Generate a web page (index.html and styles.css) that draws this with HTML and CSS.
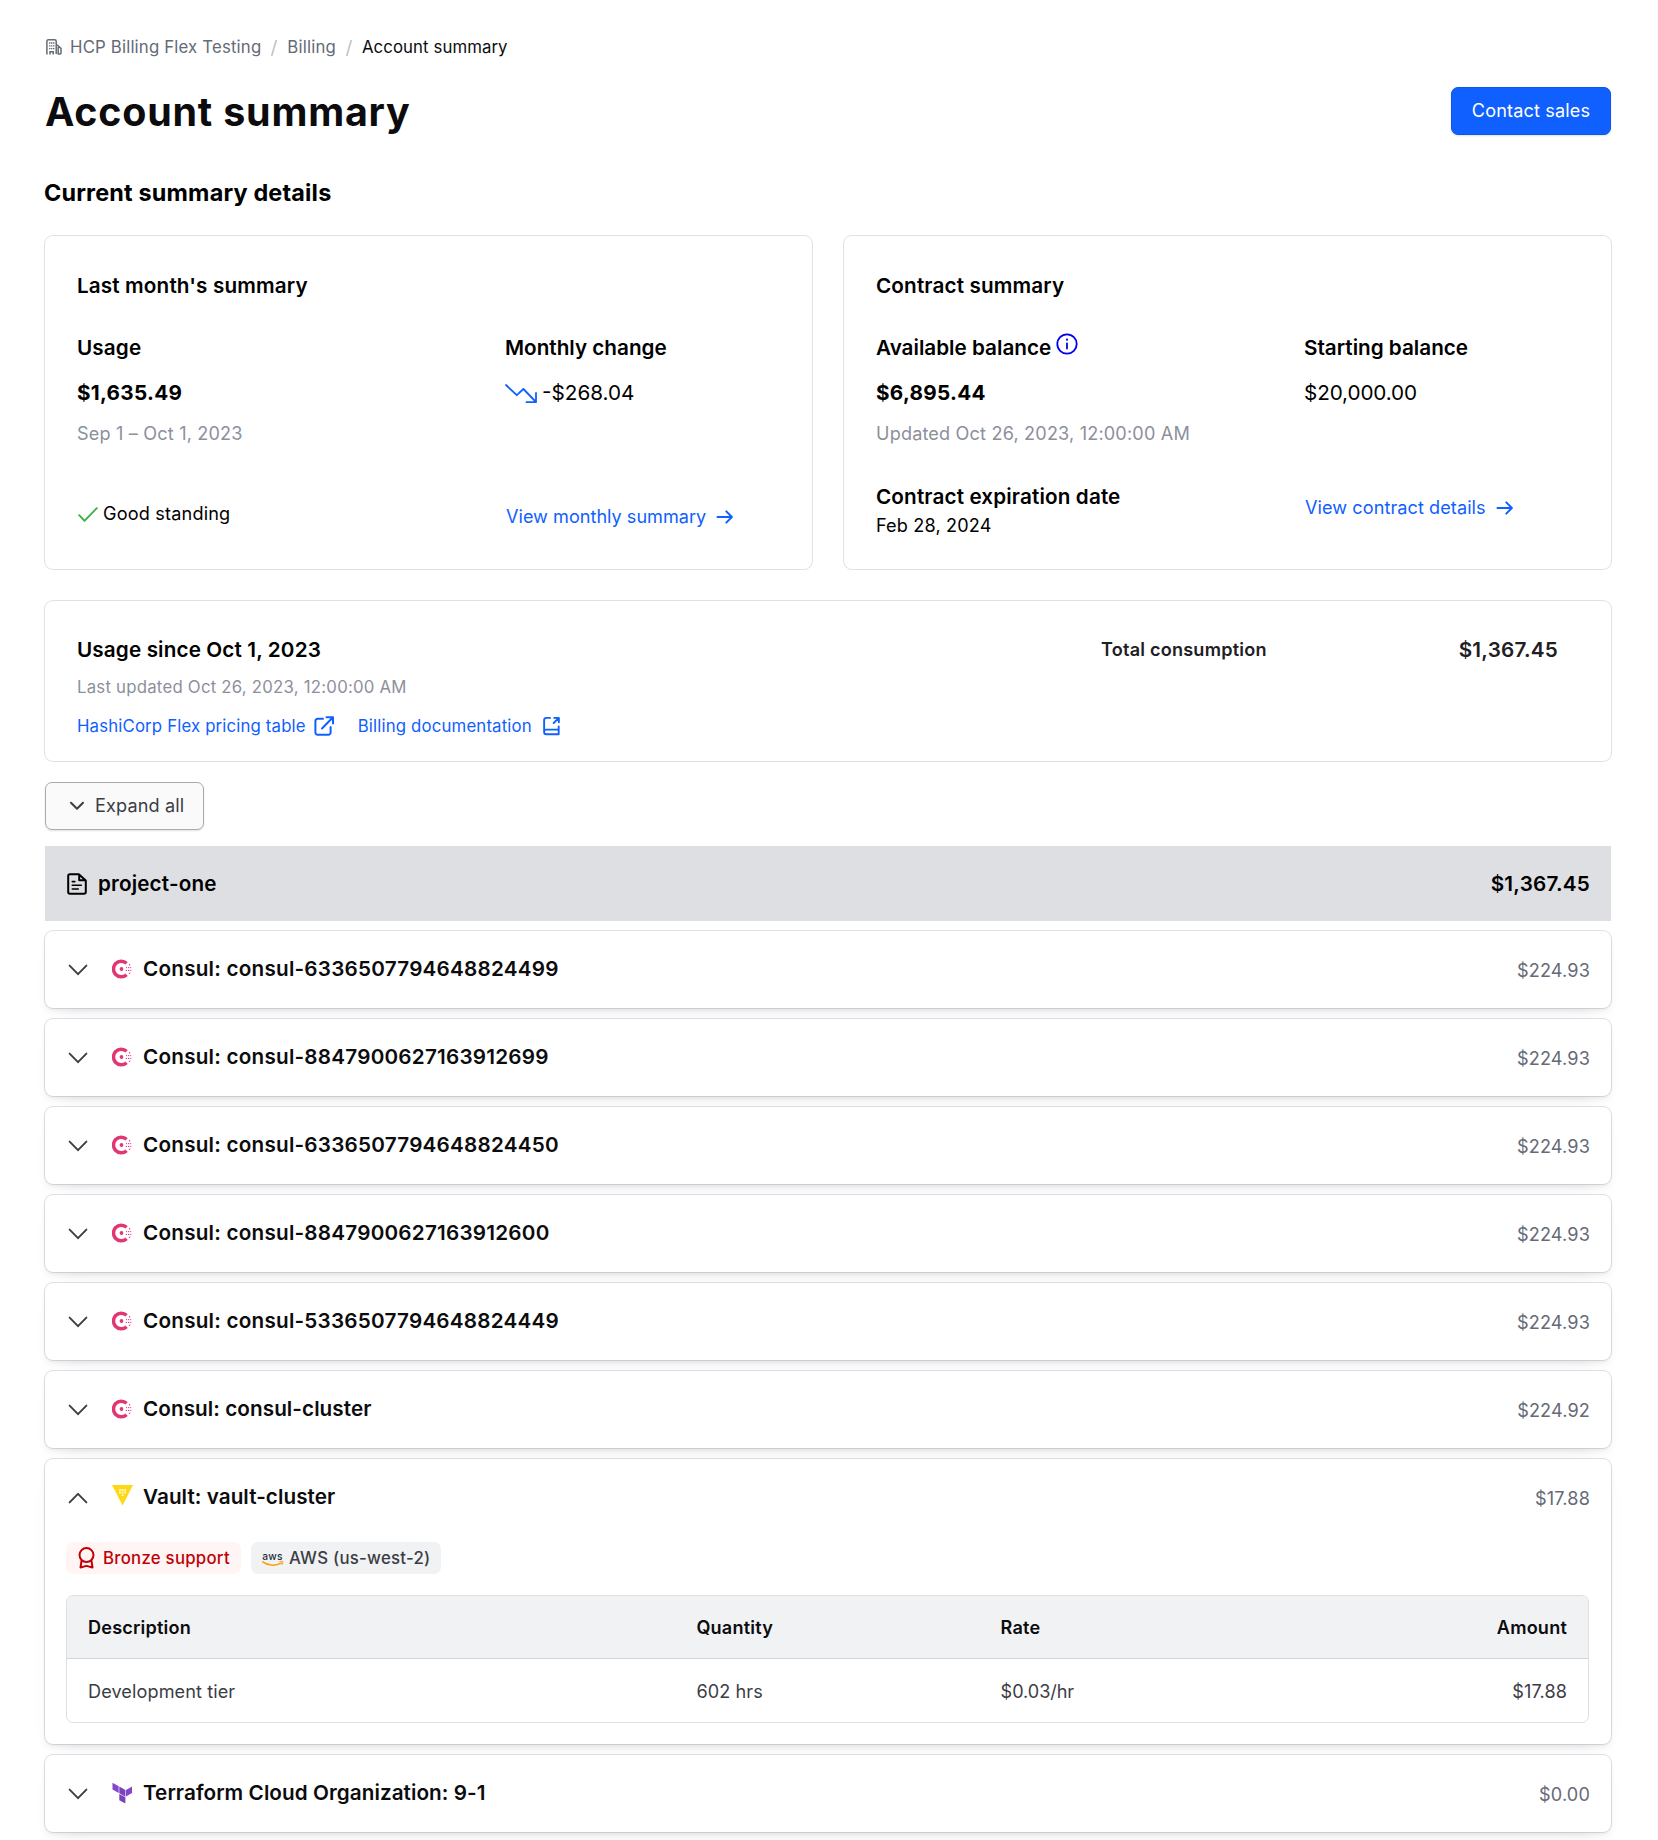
FILE: index.html
```html
<!DOCTYPE html>
<html lang="en">
<head>
<meta charset="utf-8">
<title>Account summary</title>
<link rel="stylesheet" href="styles.css">
</head>
<body>
<svg class="sprite" aria-hidden="true">
  <symbol id="chevron-down" viewBox="0 0 20 12"><path d="M1.6 1.6 10 10.2l8.4-8.6" fill="none" stroke="currentColor" stroke-width="1.9" stroke-linecap="round" stroke-linejoin="round"/></symbol>
  <symbol id="chevron-up" viewBox="0 0 20 12"><path d="M1.6 10.4 10 1.8l8.4 8.6" fill="none" stroke="currentColor" stroke-width="1.9" stroke-linecap="round" stroke-linejoin="round"/></symbol>
  <symbol id="arrow-right" viewBox="0 0 18 16"><path d="M1.5 8h14.4M10.3 2.4l5.6 5.600-5.600 5.600" fill="none" stroke="currentColor" stroke-width="2" stroke-linecap="round" stroke-linejoin="round"/></symbol>
  <symbol id="consul" viewBox="0 0 20 20">
    <path d="M14.600 4.300A7.800 7.800 0 1 0 14.600 15.700" fill="none" stroke="#e03875" stroke-width="3.500"/>
    <circle cx="9.5" cy="10" r="1.900" fill="#e03875"/>
    <g fill="#e03875"><circle cx="14.4" cy="8.600" r=".6"/><circle cx="14.4" cy="11.400" r=".6"/><circle cx="17.600" cy="5.700" r=".7"/><circle cx="16.600" cy="8.600" r=".7"/><circle cx="16.600" cy="11.400" r=".7"/><circle cx="17.600" cy="14.300" r=".7"/><circle cx="18.700" cy="8.600" r=".6"/><circle cx="18.700" cy="11.400" r=".6"/></g>
  </symbol>
</svg>
<main class="page">
  <nav class="crumbs">
    <svg class="crumb-icon" viewBox="0 0 16 16" fill="none" stroke="currentColor" stroke-width="1.5"><path d="M.9 15.6V2.3C.9 1.3 1.5.8 2.4.8h6.300c.9 0 1.500.5 1.500 1.500V15M4 15.600v-2.800h3.200v2.800M10.200 6.300h1.300l3.500 3.100v4.700c0 .5-.300.9-.9.9h-1.900V6.500" /><path d="M3 4h1.400M5 4h1.400M7 4h1.400M3 6.800h1.400M5 6.800h1.400M7 6.800h1.400M3 9.600h1.400M5 9.600h1.400M7 9.600h1.400" stroke-width="1.300"/></svg>
    <a class="crumb">HCP Billing Flex Testing</a>
    <svg class="slash" viewBox="0 0 8 18"><path d="M6.300 1 1.700 17" stroke="#c2c5cb" stroke-width="1.700" fill="none"/></svg>
    <a class="crumb">Billing</a>
    <svg class="slash" viewBox="0 0 8 18"><path d="M6.300 1 1.700 17" stroke="#c2c5cb" stroke-width="1.700" fill="none"/></svg>
    <span class="crumb current">Account summary</span>
  </nav>
  <header class="page-header">
    <h1>Account summary</h1>
    <button class="btn primary">Contact sales</button>
  </header>
  <h2>Current summary details</h2>

  <section class="cards">
    <article class="card">
      <h3>Last month's summary</h3>
      <div class="facts">
        <div>
          <h4>Usage</h4>
          <p class="value strong">$1,635.49</p>
          <p class="note">Sep 1 – Oct 1, 2023</p>
        </div>
        <div>
          <h4 class="snug">Monthly change</h4>
          <p class="value trend"><svg class="trend-icon" viewBox="0 0 32 20"><path d="M1 1l10.800 10.200 6.600-6.200L31 18M21.500 18.200H31V9" fill="none" stroke="#1060ff" stroke-width="1.800" stroke-linecap="round" stroke-linejoin="round"/></svg>-$268.04</p>
        </div>
      </div>
      <div class="card-foot">
        <p class="standing"><svg class="check" viewBox="0 0 20 15"><path d="M1.200 8.200l5.300 5.600L18.800 1.200" fill="none" stroke="#3cb043" stroke-width="1.900" stroke-linecap="round" stroke-linejoin="round"/></svg>Good standing</p>
        <a class="link view monthly">View monthly summary<svg class="arrow"><use href="#arrow-right"/></svg></a>
      </div>
    </article>
    <article class="card">
      <h3>Contract summary</h3>
      <div class="facts">
        <div>
          <h4 class="snug with-info">Available balance<svg class="info" viewBox="0 0 22 22"><circle cx="11" cy="11" r="9.700" fill="none" stroke="#0000ee" stroke-width="1.800"/><path d="M11 10.300v5.200" stroke="#0000ee" stroke-width="1.800" stroke-linecap="round"/><circle cx="11" cy="6.700" r="1.100" fill="#0000ee"/></svg></h4>
          <p class="value strong">$6,895.44</p>
          <p class="note">Updated Oct 26, 2023, 12:00:00 AM</p>
        </div>
        <div>
          <h4 class="snug">Starting balance</h4>
          <p class="value start">$20,000.00</p>
        </div>
      </div>
      <div class="card-foot">
        <div>
          <h4>Contract expiration date</h4>
          <p class="expiry">Feb 28, 2024</p>
        </div>
        <a class="link view contract">View contract details<svg class="arrow"><use href="#arrow-right"/></svg></a>
      </div>
    </article>
  </section>

  <section class="card usage">
    <div class="usage-info">
      <h3>Usage since Oct 1, 2023</h3>
      <p class="updated">Last updated Oct 26, 2023, 12:00:00 AM</p>
      <div class="doc-links">
        <a class="link small">HashiCorp Flex pricing table<svg class="ext" viewBox="0 0 20 20" fill="none" stroke="currentColor" stroke-width="2" stroke-linecap="round" stroke-linejoin="round"><path d="M9 2.800H3.600A2.200 2.200 0 0 0 1.400 5v11.600a2.200 2.200 0 0 0 2.200 2.200h10.800a2.200 2.200 0 0 0 2.200-2.200V11M12.500 1.200h6.500v6.300M19 1.200 8 12.500"/></svg></a>
        <a class="link small">Billing documentation<svg class="book" viewBox="0 0 18 20" fill="none" stroke="currentColor" stroke-width="2" stroke-linecap="round" stroke-linejoin="round"><path d="M7.500 1.400H3.400a2.200 2.200 0 0 0-2.200 2.200v13c0 1.300.9 2.200 2.200 2.200h13.200v-8.300M16.600 13.800H3.400c-1.300 0-2.200.9-2.200 2.200M11.900 1.400h4.900v4.700M16.600 1.600l-5.300 5.200"/></svg></a>
      </div>
    </div>
    <div class="total">
      <span class="total-label">Total consumption</span>
      <span class="total-value">$1,367.45</span>
    </div>
  </section>

  <button class="btn secondary"><svg class="btn-chevron" viewBox="0 0 16 10"><path d="M2 1.800l6 6 6-6" fill="none" stroke="currentColor" stroke-width="2" stroke-linecap="round" stroke-linejoin="round"/></svg>Expand all</button>

  <div class="project">
    <svg class="doc" viewBox="0 0 20 22" fill="none" stroke="#000" stroke-width="2" stroke-linejoin="round"><path d="M11.800 1.200H3A1.800 1.800 0 0 0 1.200 3v16A1.800 1.800 0 0 0 3 20.800h14a1.800 1.800 0 0 0 1.800-1.800V7.500zM12.200 1.200v6h6.200"/><path d="M5.300 8.600h2.600M5.300 12.200h9M5.300 16h6" stroke-width="1.600" stroke-linecap="round"/></svg>
    <span class="project-name">project-one</span>
    <span class="project-total">$1,367.45</span>
  </div>

  <section class="resources">
    <article class="row"><div class="row-head"><svg class="chev"><use href="#chevron-down"/></svg><svg class="logo"><use href="#consul"/></svg><span class="name">Consul: consul-6336507794648824499</span><span class="amount">$224.93</span></div></article>
    <article class="row"><div class="row-head"><svg class="chev"><use href="#chevron-down"/></svg><svg class="logo"><use href="#consul"/></svg><span class="name">Consul: consul-8847900627163912699</span><span class="amount">$224.93</span></div></article>
    <article class="row"><div class="row-head"><svg class="chev"><use href="#chevron-down"/></svg><svg class="logo"><use href="#consul"/></svg><span class="name">Consul: consul-6336507794648824450</span><span class="amount">$224.93</span></div></article>
    <article class="row"><div class="row-head"><svg class="chev"><use href="#chevron-down"/></svg><svg class="logo"><use href="#consul"/></svg><span class="name">Consul: consul-8847900627163912600</span><span class="amount">$224.93</span></div></article>
    <article class="row"><div class="row-head"><svg class="chev"><use href="#chevron-down"/></svg><svg class="logo"><use href="#consul"/></svg><span class="name">Consul: consul-5336507794648824449</span><span class="amount">$224.93</span></div></article>
    <article class="row"><div class="row-head"><svg class="chev"><use href="#chevron-down"/></svg><svg class="logo"><use href="#consul"/></svg><span class="name plain">Consul: consul-cluster</span><span class="amount">$224.92</span></div></article>
    <article class="row open">
      <div class="row-head"><svg class="chev"><use href="#chevron-up"/></svg><svg class="logo tall" viewBox="0 0 21 21"><path d="M0 0h21L10.600 20.500z" fill="#ffd814"/><path d="M7 4h1.900v1.900H7zM9.600 4h1.900v1.900H9.600zM12.200 4h1.900v1.900h-1.900zM7 6.600h1.900v1.900H7zM9.600 6.600h1.900v1.900H9.600zM12.200 6.600h1.900v1.900h-1.900zM9.600 9.200h1.900v1.900H9.600z" fill="#fff6c4"/></svg><span class="name plain">Vault: vault-cluster</span><span class="amount">$17.88</span></div>
      <div class="badges">
        <span class="badge critical"><svg class="award" viewBox="0 0 17 22" fill="none" stroke="currentColor" stroke-width="2" stroke-linejoin="round"><circle cx="8.500" cy="8.100" r="7"/><path d="M3.600 13.500 2.500 20.500l6-1.600 6 1.600-1.100-7"/></svg>Bronze support</span>
        <span class="badge neutral"><svg class="aws" viewBox="0 0 22 16"><text x="0.300" y="8.600" font-size="10.500" font-weight="500" textLength="20.500" lengthAdjust="spacingAndGlyphs" fill="#252f3e">aws</text><path d="M.8 10.900c5.200 4 13 4.200 18.300 1.200" fill="none" stroke="#f90" stroke-width="1.500" stroke-linecap="round"/><path d="M17.300 10.800c1.300-.6 2.800-.7 3.500-.3.200 1-.3 2.400-1.200 3.400" fill="none" stroke="#f90" stroke-width="1"/></svg>AWS (us-west-2)</span>
      </div>
      <table class="lines">
        <thead><tr><th class="c-desc">Description</th><th class="c-qty">Quantity</th><th class="c-rate">Rate</th><th class="c-amt">Amount</th></tr></thead>
        <tbody><tr><td>Development tier</td><td>602 hrs</td><td class="rate">$0.03/hr</td><td class="c-amt">$17.88</td></tr></tbody>
      </table>
    </article>
    <article class="row"><div class="row-head"><svg class="chev"><use href="#chevron-down"/></svg><svg class="logo" viewBox="0 0 20 20"><path d="M.5-.2l6.200 3.500v6.600L.5 6.500zM14 6.900l6-3.400v6.600l-6 3.500z" fill="#8447cb"/><path d="M7.300 3.600l6.100 3.400v6.700l-6.100-3.500z" fill="#7b42bc"/><path d="M7.300 10.900l6.100 3.400v6.300l-6.100-3.300z" fill="#7b42bc"/></svg><span class="name plain">Terraform Cloud Organization: 9-1</span><span class="amount">$0.00</span></div></article>
  </section>
</main>
</body>
</html>
```
FILE: styles.css
```css
* { box-sizing: border-box; }
body { margin: 0; background: #fff; color: #000; font-family: Inter, "Liberation Sans", sans-serif; font-size: 18.1px; }
h1, h2, h3, h4, p { margin: 0; }
svg { display: block; flex: none; overflow: visible; }
.sprite { position: absolute; width: 0; height: 0; overflow: hidden; }
.page { height: 1840px; padding: 35px 47px 0 45px; overflow: hidden; }

.crumbs { display: flex; align-items: center; height: 24px; font-size: 16.8px; letter-spacing: .16px; color: #656a76; }
.crumb-icon { width: 16px; height: 16px; margin: 0 8px 0 1px; }
.slash { width: 8px; height: 18px; margin: 2px 9px 0 9px; }
.crumb.current { color: #0c0c0e; letter-spacing: .08px; }

.page-header { display: flex; justify-content: space-between; align-items: flex-start; height: 48px; margin-top: 28px; }
h1 { font-size: 39.4px; line-height: 50px; font-weight: 700; letter-spacing: .8px; color: #0c0c0e; }
h2 { margin-top: 44px; font-size: 23.4px; line-height: 28px; font-weight: 700; letter-spacing: .18px; margin-left: -1px; }

.btn { display: flex; align-items: center; height: 48px; border-radius: 7px; font: inherit; letter-spacing: .14px; line-height: 24px; }
.primary { width: 160px; justify-content: center; padding: 0 0 2px; border: 1px solid #0c56e9; background: #1060ff; color: #fff; box-shadow: 0 1px 2px rgba(101, 106, 118, .2); }
.secondary { width: 159px; margin-top: 21px; padding: 0 0 2px 23px; border: 1px solid #a9abb1; background: #fafafa; color: #3b3d45; box-shadow: 0 1px 2px rgba(101, 106, 118, .2); }
.btn-chevron { width: 16px; height: 10px; margin: 1px 10px 0 0; }

.cards { display: grid; grid-template-columns: 1fr 1fr; gap: 32px; margin-top: 29px; }
.card { border-radius: 8px; box-shadow: 0 0 0 1px #e0e1e4; background: #fff; }
.cards .card { height: 333px; padding: 36px 32px 0; }
h3, h4 { font-size: 20.7px; line-height: 28px; font-weight: 600; letter-spacing: .13px; }
.snug { letter-spacing: 0; }
.facts { display: grid; grid-template-columns: 428px 1fr; height: 116px; margin-top: 34px; }
.with-info { display: flex; }
.info { width: 22px; height: 22px; margin: -1px 0 0 5px; }
.value { margin-top: 17px; font-size: 20.7px; line-height: 28px; }
.value.strong { font-weight: 700; letter-spacing: .28px; }
.value.start { letter-spacing: -.1px; }
.trend { display: flex; }
.trend-icon { width: 32px; height: 20px; margin: 5px 5px 0 0; }
.note { margin-top: 14px; line-height: 25px; letter-spacing: .17px; color: #8c909c; }
.card-foot { display: grid; grid-template-columns: 428px 1fr; align-items: start; margin-top: 33px; }
.standing { display: flex; align-items: center; margin-top: 18px; line-height: 25px; letter-spacing: .18px; }
.check { width: 20px; height: 15px; margin: 2px 5px 0 1px; }
.expiry { margin-top: 2px; line-height: 25px; letter-spacing: .15px; }
.link { display: flex; align-items: center; color: #1060ff; text-decoration: none; }
.view { line-height: 25px; padding-left: 1px; }
.monthly { margin-top: 21px; letter-spacing: .01px; }
.contract { margin-top: 12px; letter-spacing: .07px; }
.arrow { width: 18px; height: 16px; margin-left: 10px; }

.usage { display: flex; justify-content: space-between; height: 160px; margin-top: 32px; padding: 35px 53px 0 32px; }
.updated { margin-top: 11px; font-size: 16.8px; line-height: 24px; letter-spacing: .22px; color: #8c909c; }
.doc-links { display: flex; gap: 24px; margin-top: 15px; }
.small { font-size: 16.8px; line-height: 24px; letter-spacing: .15px; }
.ext { width: 20px; height: 20px; margin-left: 8px; }
.book { width: 17px; height: 20px; margin-left: 11px; }
.total { display: flex; justify-content: space-between; width: 457px; line-height: 28px; font-weight: 600; letter-spacing: .21px; color: #1e2024; }
.total-label { margin-top: -1px; }
.total-value { font-size: 20.7px; }

.project { display: flex; align-items: center; height: 75px; margin-top: 16px; padding: 0 21px 0 22px; background: #dedfe3; font-size: 20.7px; font-weight: 600; letter-spacing: .21px; }
.doc { width: 20px; height: 22px; margin-right: 11px; }
.project-name { letter-spacing: .14px; }
.project-total { margin-left: auto; }

.resources { display: flex; flex-direction: column; gap: 11px; margin-top: 10px; }
.row { border-radius: 8px; background: #fff; box-shadow: 0 0 0 1px rgba(101, 106, 118, .2), 0 3px 4px rgba(101, 106, 118, .1), 0 11px 21px -13px rgba(101, 106, 118, .2); }
.row-head { display: flex; align-items: center; height: 77px; padding: 0 21px 2px 23px; }
.chev { width: 20px; height: 12px; margin: 2px 24px 0 0; color: #3b3d45; }
.logo { width: 20px; height: 20px; margin-right: 11px; }
.logo.tall { width: 21px; height: 21px; margin: -3px 10px 0 0; }
.name { font-size: 20.7px; font-weight: 600; letter-spacing: .215px; color: #0c0c0e; }
.name.plain { letter-spacing: .06px; }
.amount { margin: 2px 0 0 auto; letter-spacing: .15px; color: #656a76; }
.open { height: 285px; }

.badges { display: flex; gap: 10px; margin: 6px 0 0 21px; }
.badge { display: flex; align-items: center; height: 32px; border-radius: 7px; font-size: 16.8px; font-weight: 500; letter-spacing: .25px; }
.critical { width: 175px; padding-left: 12px; background: #fff5f5; color: #c00005; }
.neutral { width: 190px; padding-left: 11px; background: #f1f2f3; color: #3b3d45; }
.award { width: 17px; height: 22px; margin-right: 8px; }
.aws { width: 22px; height: 16px; margin: 1px 5px 0 0; }

.lines { width: calc(100% - 43px); margin: 21px 0 0 21px; border: 1px solid #dedfe3; border-radius: 7px; border-collapse: separate; border-spacing: 0; table-layout: fixed; overflow: hidden; letter-spacing: .1px; }
.lines th, .lines td { padding: 0 21px; text-align: left; }
.lines th { height: 63px; background: #f1f2f3; border-bottom: 1px solid #d3d5d9; font-weight: 600; letter-spacing: .2px; color: #0c0c0e; }
.lines td { height: 63px; color: #3b3d45; }
.lines .rate { letter-spacing: -.05px; }
.lines .c-amt { text-align: right; }
.c-desc { width: 40%; }
.c-qty, .c-rate, .c-amt { width: 20%; }
```
